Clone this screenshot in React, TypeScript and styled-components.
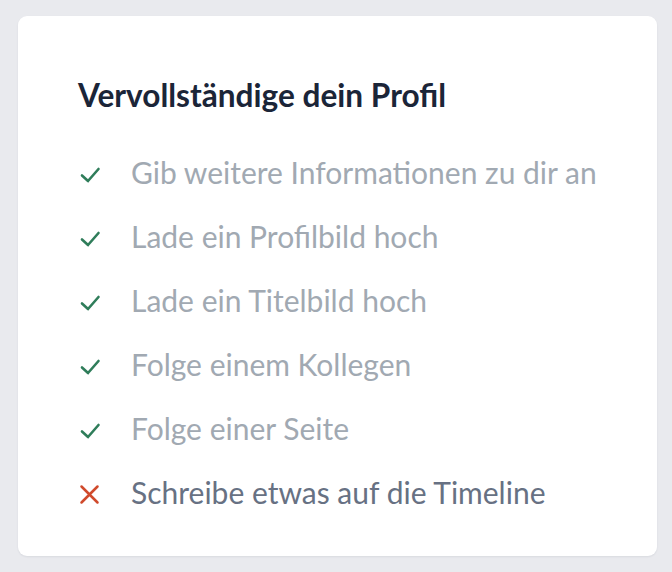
import React from "react";
import styled, { createGlobalStyle } from "styled-components";

const Global = createGlobalStyle`
  html, body { margin: 0; padding: 0; background: #e9eaee; }
  body { font-family: Lato, "Noto Sans", sans-serif; -webkit-font-smoothing: antialiased; }
`;

const Page = styled.div`
  padding: 16px 15px 16px 18px;
`;

const Card = styled.section`
  width: 639px;
  height: 540px;
  box-sizing: border-box;
  background: #ffffff;
  border-radius: 9px;
  box-shadow: 0 1px 2px rgba(30, 40, 60, 0.08);
  padding: 60px 20px 0 60px;
`;

const Title = styled.h2`
  margin: 0 0 42px;
  font-size: 31.6px;
  line-height: 38px;
  font-weight: 700;
  color: #1b2538;
  white-space: nowrap;
`;

const List = styled.ul`
  list-style: none;
  margin: 0;
  padding: 0;
  display: flex;
  flex-direction: column;
  gap: 32px;
`;

const Item = styled.li<{ $done: boolean }>`
  display: flex;
  align-items: center;
  gap: 29px;
  font-size: 30px;
  line-height: 32px;
  white-space: nowrap;
  color: ${(p) => (p.$done ? "#a1a9b2" : "#677183")};
`;

const IconBox = styled.span`
  width: 24px;
  height: 24px;
  flex: none;
  display: flex;
  align-items: center;
  justify-content: center;
  svg { overflow: visible; }
`;

const Check = () => (
  <svg width="24" height="24" viewBox="0 0 24 24" fill="none">
    <path d="M4 15.5 L10 21 L20.5 9" stroke="#2f7d5a" strokeWidth="2.6" strokeLinecap="round" strokeLinejoin="round" />
  </svg>
);

const Cross = () => (
  <svg width="24" height="24" viewBox="0 0 24 24" fill="none">
    <path d="M3.5 6.5 L19.5 22.5 M19.5 6.5 L3.5 22.5" stroke="#d04a2c" strokeWidth="2.5" strokeLinecap="round" />
  </svg>
);

const items = [
  { text: "Gib weitere Informationen zu dir an", done: true },
  { text: "Lade ein Profilbild hoch", done: true },
  { text: "Lade ein Titelbild hoch", done: true },
  { text: "Folge einem Kollegen", done: true },
  { text: "Folge einer Seite", done: true },
  { text: "Schreibe etwas auf die Timeline", done: false },
];

export default function App() {
  return (
    <Page>
      <Global />
      <Card>
        <Title>Vervollständige dein Profil</Title>
        <List>
          {items.map((it) => (
            <Item key={it.text} $done={it.done}>
              <IconBox>{it.done ? <Check /> : <Cross />}</IconBox>
              <span>{it.text}</span>
            </Item>
          ))}
        </List>
      </Card>
    </Page>
  );
}
